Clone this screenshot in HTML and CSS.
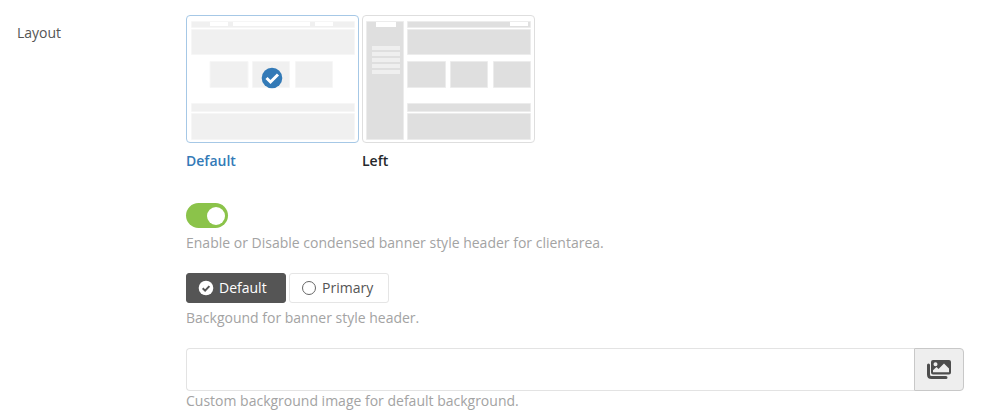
FILE: index.html
```html
<!DOCTYPE html>
<html lang="en">
<head>
<meta charset="utf-8">
<title>Layout settings</title>
<link rel="stylesheet" href="styles.css">
</head>
<body>
<form class="settings">
  <div class="settings-name" id="layout-name">Layout</div>
  <div class="settings-body">
    <div class="layouts" role="radiogroup" aria-labelledby="layout-name">
      <label class="layout">
        <input class="overlay-input" type="radio" name="layout" checked>
        <span class="preview">
          <svg class="preview-art art-light" viewBox="0 0 171 126" aria-hidden="true">
            <g class="block">
              <path d="M4.500 5.500h163v6h-163zM4.500 13.500h163v25h-163zM23 45.500h38v26h-38zM65.500 45.500h37v26h-37zM108.500 45.500h37v26h-37zM4.500 87.500h163v8h-163zM4.500 97.500h163v26h-163z"/>
            </g>
            <g class="gap">
              <path d="M23 6h18v4H23zM46 6h77v4H46zM128 6h18v4h-18z"/>
            </g>
            <circle class="mark" cx="85" cy="62" r="10.300"/>
            <path class="tick" d="M79.500 62l4 4 7.500-7.500"/>
          </svg>
        </span>
        <span class="layout-title">Default</span>
      </label>
      <label class="layout">
        <input class="overlay-input" type="radio" name="layout">
        <span class="preview">
          <svg class="preview-art art-dark" viewBox="0 0 171 126" aria-hidden="true">
            <g class="block">
              <path d="M3.500 5.500h37v118h-37zM44.500 5.500h123v6h-123zM44.500 13.500h123v25h-123zM44.500 45.500h38v26h-38zM87.500 45.500h37v26h-37zM130.500 45.500h37v26h-37zM44.500 87.500h123v8h-123zM44.500 97.500h123v26h-123z"/>
            </g>
            <g class="gap">
              <path d="M13 6h20v5H13zM147 6h18v4h-18z"/>
            </g>
            <path class="lines" d="M9 30h28v4H9zM9 36h28v4H9zM9 42h28v4H9zM9 48h28v4H9zM9 54h28v4H9z"/>
          </svg>
        </span>
        <span class="layout-title">Left</span>
      </label>
    </div>

    <div class="field">
      <input class="switch" type="checkbox" role="switch" id="condensed" checked>
      <label class="hint" for="condensed">Enable or Disable condensed banner style header for clientarea.</label>
    </div>

    <div class="field">
      <div class="choices" role="radiogroup" aria-labelledby="background-hint">
        <label class="choice">
          <input class="overlay-input" type="radio" name="background" checked>
          <svg class="choice-icon" viewBox="0 0 16 16" aria-hidden="true">
            <circle class="dot-full" cx="8" cy="8" r="7.300"/>
            <path class="dot-tick" d="M4.700 8.200l2.400 2.400 4.300-4.500"/>
          </svg>
          <span>Default</span>
        </label>
        <label class="choice">
          <input class="overlay-input" type="radio" name="background">
          <svg class="choice-icon" viewBox="0 0 16 16" aria-hidden="true">
            <circle class="dot-empty" cx="8" cy="8" r="6.500"/>
          </svg>
          <span>Primary</span>
        </label>
      </div>
      <div class="hint" id="background-hint">Backgound for banner style header.</div>
    </div>

    <div class="field">
      <div class="picker">
        <input class="picker-input" type="text" id="image">
        <button class="picker-button" type="button" aria-label="Choose image">
          <svg class="picker-icon" viewBox="0 0 24 19" aria-hidden="true">
            <path class="picker-back" d="M1.500 5v9.500q0 3 3 3H19"/>
            <path class="picker-front" fill-rule="evenodd" d="M6 0h16q2 0 2 2v10.500q0 2-2 2H6q-2 0-2-2V2q0-2 2-2zM8.500 2.200a2 2 0 1 0 0 4 2 2 0 0 0 0-4zM6 12.300h16V8.500l-5-5-5.500 5.500-2-2L6 10.200z"/>
          </svg>
        </button>
      </div>
      <label class="hint" for="image">Custom background image for default background.</label>
    </div>
  </div>
</form>
</body>
</html>
```
FILE: styles.css
```css
* {
  box-sizing: border-box;
}

body {
  margin: 0;
  background: #fff;
  color: #555;
  font: 14px/20px "Open Sans", sans-serif;
}

.settings {
  display: grid;
  grid-template-columns: 169px minmax(0, 1fr);
  padding: 15px 24px 7px 17px;
}

.settings-name {
  padding-top: 8px;
}

.settings-body {
  display: flex;
  flex-direction: column;
}

.layouts {
  display: flex;
  gap: 3px;
  margin-bottom: 32px;
}

.layout {
  position: relative;
  width: 173px;
  cursor: pointer;
}

.overlay-input {
  position: absolute;
  inset: 0;
  width: 100%;
  height: 100%;
  margin: 0;
  opacity: 0;
  cursor: pointer;
}

.preview {
  display: block;
  border: 1px solid #dedede;
  border-radius: 4px;
}

.overlay-input:checked + .preview {
  border-color: #a6c8e6;
}

.preview-art {
  display: block;
  width: 100%;
}

.art-light .block {
  fill: #f0f0f0;
  stroke: #f6f6f6;
}

.art-dark .block {
  fill: #dfdfdf;
  stroke: #ececec;
}

.gap {
  fill: #fff;
}

.lines {
  fill: #efefef;
}

.mark {
  fill: #337ab7;
}

.tick {
  fill: none;
  stroke: #fff;
  stroke-width: 3;
}

.layout-title {
  display: block;
  padding-top: 8px;
  color: #25282b;
  font-weight: 600;
}

.overlay-input:checked ~ .layout-title {
  color: #337ab7;
}

.field {
  display: flex;
  flex-direction: column;
  margin-bottom: 20px;
}

.field:last-child {
  margin-bottom: 0;
}

.switch {
  appearance: none;
  width: 42px;
  height: 25px;
  margin: 0 0 5px;
  padding: 4px 3px;
  border-radius: 13px;
  background: #ccc;
  cursor: pointer;
}

.switch::before {
  content: "";
  display: block;
  width: 18px;
  height: 18px;
  border-radius: 50%;
  background: #fff;
}

.switch:checked {
  background: #8bc34a;
}

.switch:checked::before {
  margin-left: auto;
}

.hint {
  color: #a3a3a3;
}

.choices {
  display: flex;
  gap: 3px;
  margin-bottom: 5px;
}

.choice {
  position: relative;
  display: flex;
  align-items: center;
  gap: 5px;
  width: 100px;
  height: 30px;
  padding-left: 11px;
  border: 1px solid #e5e5e5;
  border-radius: 3px;
}

.choice:has(:checked) {
  border-color: #555;
  background: #555;
  color: #fff;
}

.choice-icon {
  width: 16px;
  height: 16px;
}

.dot-full {
  fill: #fff;
}

.dot-tick {
  fill: none;
  stroke: #555;
  stroke-width: 2;
}

.dot-empty {
  fill: none;
  stroke: #666;
}

.picker {
  display: flex;
  height: 43px;
}

.picker-input {
  flex: 1;
  min-width: 0;
  padding: 0 12px;
  border: 1px solid #e3e3e3;
  border-right: 0;
  border-radius: 4px 0 0 4px;
  font: inherit;
}

.picker-button {
  display: flex;
  align-items: center;
  justify-content: center;
  width: 50px;
  padding: 0;
  border: 1px solid #c8c8c8;
  border-radius: 0 4px 4px 0;
  background: #eee;
}

.picker-icon {
  width: 24px;
  height: 19px;
}

.picker-back {
  fill: none;
  stroke: #4d4d4d;
  stroke-width: 3;
  stroke-linecap: round;
}

.picker-front {
  fill: #4d4d4d;
  stroke: #eee;
  paint-order: stroke;
}
```
